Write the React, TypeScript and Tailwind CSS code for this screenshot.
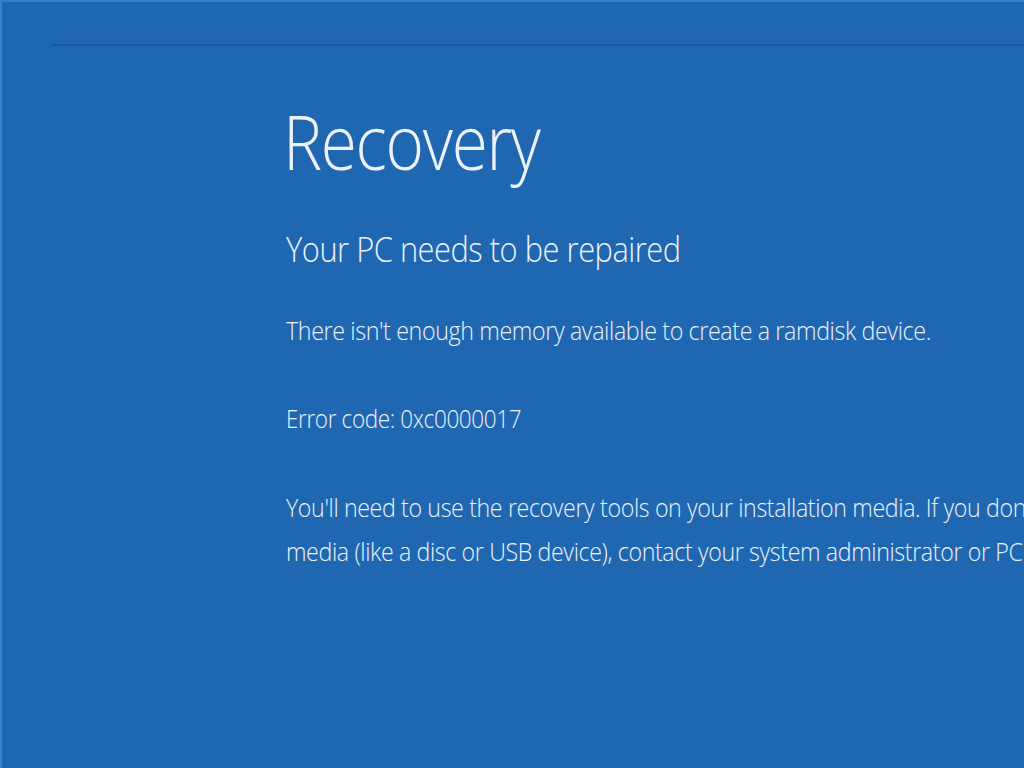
export default function App() {
  return (
    <div
      className="relative w-[1024px] h-[768px] overflow-hidden bg-[#2067b2] text-[#edf2f9] border-l-2 border-t-2 border-l-[#3a80cf] border-t-[#3b7fcc]"
      style={{ fontFamily: '"Open Sans", "Noto Sans", sans-serif' }}
    >
      <div className="ml-[50px] mt-[42px] h-[2px] bg-[#195a9f]" />
      <div className="pl-[284px] flex flex-col items-start">
        <h1 className="-ml-[3px] mt-[55px] text-[76px] leading-[80px] font-light tracking-[-1.5px] origin-left scale-x-[0.865]">Recovery</h1>
        <h2 className="mt-[48px] text-[34px] leading-[40px] font-light tracking-[-0.5px] origin-left scale-x-[0.905]">Your PC needs to be repaired</h2>
        <p className="mt-[45px] text-[25px] leading-[32px] font-light tracking-[-0.4px] origin-left scale-x-[0.93] whitespace-nowrap">There isn't enough memory available to create a ramdisk device.</p>
        <p className="mt-[56px] text-[25px] leading-[32px] font-light tracking-[-0.4px] origin-left scale-x-[0.9] whitespace-nowrap">Error code: 0xc0000017</p>
        <div className="mt-[51px] text-[25px] leading-[44px] font-light tracking-[-0.4px] whitespace-nowrap origin-left scale-x-[0.928]">
          <p>You'll need to use the recovery tools on your installation media. If you don't have any installation</p>
          <p>media (like a disc or USB device), contact your system administrator or PC manufacturer.</p>
        </div>
      </div>
    </div>
  );
}
